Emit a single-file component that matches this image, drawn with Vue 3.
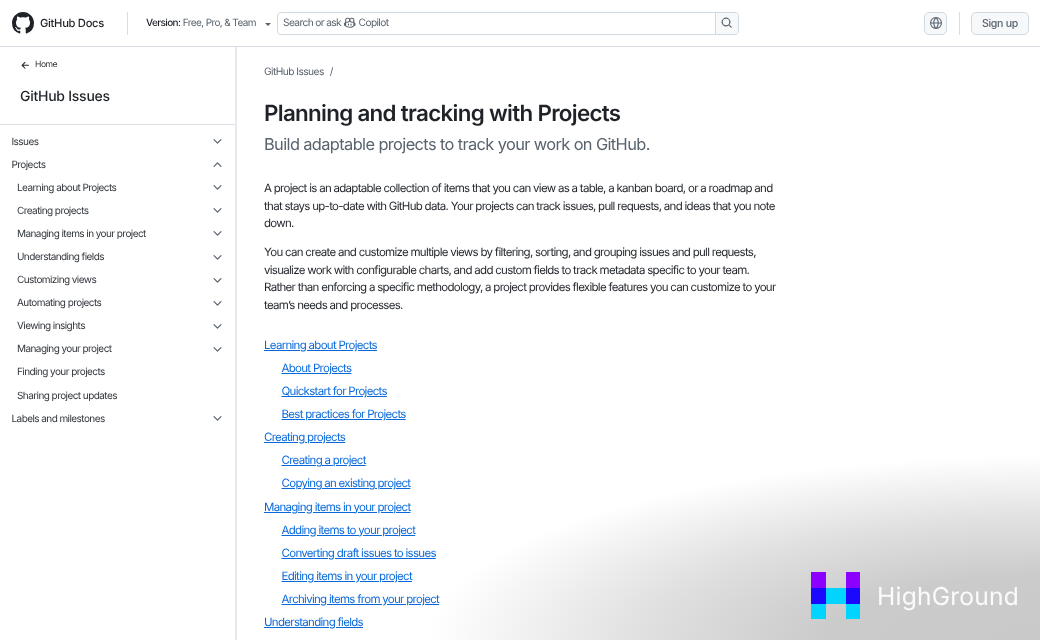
<template>
  <div class="page">
    <header class="topbar">
      <a class="brand">
        <svg class="mark" viewBox="0 0 16 16"><path d="M8 0c4.42 0 8 3.58 8 8a8.013 8.013 0 0 1-5.45 7.59c-.4.08-.55-.17-.55-.38 0-.27.01-1.13.01-2.2 0-.75-.25-1.23-.54-1.48 1.78-.2 3.65-.88 3.65-3.95 0-.88-.31-1.59-.82-2.15.08-.2.36-1.02-.08-2.12 0 0-.67-.22-2.2.82-.64-.18-1.32-.27-2-.27-.68 0-1.36.09-2 .27-1.53-1.03-2.2-.82-2.2-.82-.44 1.1-.16 1.92-.08 2.12-.51.56-.82 1.28-.82 2.15 0 3.06 1.86 3.75 3.64 3.95-.23.2-.44.55-.51 1.07-.46.21-1.61.55-2.33-.66-.15-.24-.6-.83-1.23-.82-.67.01-.27.38.01.53.34.19.73.9.82 1.13.16.45.68 1.31 2.69.94 0 .67.01 1.3.01 1.49 0 .21-.15.45-.55.38A7.995 7.995 0 0 1 0 8c0-4.42 3.58-8 8-8Z" /></svg>
        <span>GitHub Docs</span>
      </a>
      <span class="vline"></span>
      <div class="version">
        <span><b>Version:</b> Free, Pro, &amp; Team</span>
        <i class="caret"></i>
      </div>
      <div class="search">
        <div class="search-input">
          <span>Search or ask</span>
          <svg class="copilot" viewBox="0 0 16 16"><path d="M7.998 15.035c-4.562 0-7.873-2.914-7.998-3.749V9.338c.085-.628.677-1.686 1.588-2.065.013-.07.024-.143.036-.218.029-.183.06-.384.126-.612-.201-.508-.254-1.084-.254-1.656 0-.87.128-1.769.693-2.484.579-.733 1.494-1.124 2.724-1.261 1.206-.134 2.262.034 2.944.765.05.053.096.108.139.165.044-.057.094-.112.143-.165.682-.731 1.738-.899 2.944-.765 1.23.137 2.145.528 2.724 1.261.566.715.693 1.614.693 2.484 0 .572-.053 1.148-.254 1.656.066.228.098.429.126.612.012.076.024.148.037.218.924.385 1.522 1.471 1.591 2.095v1.872c0 .766-3.351 3.795-8.002 3.795Zm0-1.485c2.28 0 4.584-1.11 5.002-1.433V7.862l-.023-.116c-.49.21-1.075.291-1.727.291-1.146 0-2.059-.327-2.71-.991A3.222 3.222 0 0 1 8 6.303a3.24 3.24 0 0 1-.544.743c-.65.664-1.563.991-2.71.991-.652 0-1.236-.081-1.727-.291l-.023.116v4.255c.419.323 2.722 1.433 5.002 1.433ZM6.762 2.83c-.193-.206-.637-.413-1.682-.297-1.019.113-1.479.404-1.713.7-.247.312-.369.789-.369 1.554 0 .793.129 1.171.308 1.371.162.181.519.379 1.442.379.853 0 1.339-.235 1.638-.54.315-.322.527-.827.617-1.553.117-.935-.037-1.395-.241-1.614Zm4.155-.297c-1.044-.116-1.488.091-1.681.297-.204.219-.359.679-.242 1.614.091.726.303 1.231.618 1.553.299.305.784.54 1.638.54.922 0 1.28-.198 1.442-.379.179-.2.308-.578.308-1.371 0-.765-.123-1.242-.37-1.554-.233-.296-.693-.587-1.713-.7Z" /><path d="M6.25 9.037a.75.75 0 0 1 .75.75v1.501a.75.75 0 0 1-1.5 0V9.787a.75.75 0 0 1 .75-.75Zm4.25.75v1.501a.75.75 0 0 1-1.5 0V9.787a.75.75 0 0 1 1.5 0Z" /></svg>
          <span>Copilot</span>
        </div>
        <button class="search-btn">
          <svg viewBox="0 0 16 16"><path d="M10.68 11.74a6 6 0 0 1-7.922-8.982 6 6 0 0 1 8.982 7.922l3.04 3.04a.749.749 0 0 1-.326 1.275.749.749 0 0 1-.734-.215ZM11.5 7a4.499 4.499 0 1 0-8.997 0A4.499 4.499 0 0 0 11.5 7Z" /></svg>
        </button>
      </div>
      <div class="top-right">
        <button class="globe">
          <svg viewBox="0 0 16 16"><path d="M8 0a8 8 0 1 1 0 16A8 8 0 0 1 8 0ZM5.78 8.75a9.64 9.64 0 0 0 1.363 4.177c.255.426.542.832.857 1.215.245-.296.551-.705.857-1.215A9.64 9.64 0 0 0 10.22 8.75Zm4.44-1.5a9.64 9.64 0 0 0-1.363-4.177c-.307-.51-.612-.919-.857-1.215a9.927 9.927 0 0 0-.857 1.215A9.64 9.64 0 0 0 5.78 7.25Zm-5.944 1.5H1.543a6.507 6.507 0 0 0 4.666 5.5c-.123-.181-.24-.365-.352-.552-.715-1.192-1.437-2.874-1.581-4.948Zm-2.733-1.5h2.733c.144-2.074.866-3.756 1.58-4.948.12-.197.237-.381.353-.552a6.507 6.507 0 0 0-4.666 5.5Zm10.181 1.5c-.144 2.074-.866 3.756-1.58 4.948-.12.197-.237.381-.353.552a6.507 6.507 0 0 0 4.666-5.5Zm2.733-1.5a6.507 6.507 0 0 0-4.666-5.5c.123.181.24.365.353.552.714 1.192 1.436 2.874 1.58 4.948Z" /></svg>
        </button>
        <span class="vline"></span>
        <button class="signup">Sign up</button>
      </div>
    </header>

    <div class="body">
      <aside class="sidebar">
        <div class="side-head">
          <a class="home">
            <svg viewBox="0 0 16 16"><path d="M7.78 12.53a.75.75 0 0 1-1.06 0L2.47 8.28a.75.75 0 0 1 0-1.06l4.25-4.25a.751.751 0 0 1 1.042.018.751.751 0 0 1 .018 1.042L4.81 7h7.44a.75.75 0 0 1 0 1.5H4.81l2.97 2.97a.75.75 0 0 1 0 1.06Z" /></svg>
            Home
          </a>
          <div class="side-title">GitHub Issues</div>
        </div>
        <ul class="nav">
          <li v-for="item in navItems" :key="item.label" :class="{ sub: item.sub }">
            <span>{{ item.label }}</span>
            <svg v-if="item.chevron" :class="{ up: item.chevron === 'up' }" viewBox="0 0 16 16"><path d="M12.78 5.22a.749.749 0 0 1 0 1.06l-4.25 4.25a.749.749 0 0 1-1.06 0L3.22 6.28a.749.749 0 1 1 1.06-1.06L8 8.939l3.72-3.719a.749.749 0 0 1 1.06 0Z" /></svg>
          </li>
        </ul>
      </aside>

      <main class="content">
        <div class="crumbs"><span>GitHub Issues</span><span>/</span></div>
        <h1>Planning and tracking with Projects</h1>
        <p class="lead">Build adaptable projects to track your work on GitHub.</p>
        <p class="para">A project is an adaptable collection of items that you can view as a table, a kanban board, or a roadmap and that stays up-to-date with GitHub data. Your projects can track issues, pull requests, and ideas that you note down.</p>
        <p class="para">You can create and customize multiple views by filtering, sorting, and grouping issues and pull requests, visualize work with configurable charts, and add custom fields to track metadata specific to your team. Rather than enforcing a specific methodology, a project provides flexible features you can customize to your team’s needs and processes.</p>
        <ul class="links">
          <li v-for="link in links" :key="link.label" :class="{ indent: link.indent }"><a>{{ link.label }}</a></li>
        </ul>
      </main>
    </div>

    <div class="watermark">
      <div class="wm-logo">
        <i class="violet"></i><i></i><i class="violet"></i>
        <i class="blue"></i><i class="cyan"></i><i class="blue"></i>
        <i class="cyan"></i><i></i><i class="cyan"></i>
      </div>
      <span class="wm-text">HighGround</span>
    </div>
  </div>
</template>

<script setup>
const navItems = [
  { label: "Issues", chevron: "down" },
  { label: "Projects", chevron: "up" },
  { label: "Learning about Projects", chevron: "down", sub: true },
  { label: "Creating projects", chevron: "down", sub: true },
  { label: "Managing items in your project", chevron: "down", sub: true },
  { label: "Understanding fields", chevron: "down", sub: true },
  { label: "Customizing views", chevron: "down", sub: true },
  { label: "Automating projects", chevron: "down", sub: true },
  { label: "Viewing insights", chevron: "down", sub: true },
  { label: "Managing your project", chevron: "down", sub: true },
  { label: "Finding your projects", sub: true },
  { label: "Sharing project updates", sub: true },
  { label: "Labels and milestones", chevron: "down" },
];

const links = [
  { label: "Learning about Projects" },
  { label: "About Projects", indent: true },
  { label: "Quickstart for Projects", indent: true },
  { label: "Best practices for Projects", indent: true },
  { label: "Creating projects" },
  { label: "Creating a project", indent: true },
  { label: "Copying an existing project", indent: true },
  { label: "Managing items in your project" },
  { label: "Adding items to your project", indent: true },
  { label: "Converting draft issues to issues", indent: true },
  { label: "Editing items in your project", indent: true },
  { label: "Archiving items from your project", indent: true },
  { label: "Understanding fields" },
];
</script>

<style>
html,
body {
  margin: 0;
  overflow: hidden;
}
</style>

<style scoped>
.page {
  position: relative;
  height: 640px;
  overflow: hidden;
  background: #fff;
  color: #1f2328;
  font-family: Inter, "Liberation Sans", sans-serif;
  text-rendering: geometricPrecision;
}
.topbar {
  height: 47px;
  box-sizing: border-box;
  border-bottom: 1px solid #d8dee4;
  display: flex;
  align-items: center;
  padding: 0 11px 0 12px;
}
.brand {
  display: flex;
  align-items: center;
  gap: 6px;
  font-size: 11.2px;
  letter-spacing: -0.3px;
  font-weight: 500;
}
.mark {
  width: 22px;
  height: 22px;
  fill: #1f2328;
}
.vline {
  width: 1px;
  height: 23px;
  background: #d8dee4;
}
.brand + .vline {
  margin-left: 23px;
}
.version {
  margin-left: 18px;
  margin-top: -1px;
  width: 125px;
  flex: none;
  display: flex;
  align-items: center;
  justify-content: space-between;
  font-size: 10px;
  letter-spacing: -0.6px;
  color: #59636e;
  white-space: nowrap;
}
.version b {
  font-weight: 500;
  color: #1f2328;
}
.caret {
  border: 3px solid transparent;
  border-top-color: #59636e;
  border-bottom: 0;
  margin-top: 3px;
}
.search {
  margin-left: 6px;
  width: 462px;
  height: 23px;
  display: flex;
  box-sizing: border-box;
  border: 1px solid #d1d9e0;
  border-radius: 4px;
}
.search-input {
  flex: 1;
  display: flex;
  align-items: center;
  gap: 3px;
  padding-left: 5px;
  font-size: 10.2px;
  letter-spacing: -0.62px;
  color: #59636e;
}
.copilot {
  width: 11.5px;
  height: 11.5px;
  fill: #59636e;
}
.search-btn {
  width: 23px;
  padding: 0;
  border: 0;
  border-left: 1px solid #d1d9e0;
  background: #f6f8fa;
  border-radius: 0 3px 3px 0;
  display: flex;
  align-items: center;
  justify-content: center;
}
.search-btn svg {
  width: 11.5px;
  height: 11.5px;
  fill: #59636e;
}
.top-right {
  margin-left: auto;
  display: flex;
  align-items: center;
}
.globe {
  width: 23px;
  height: 23px;
  padding: 0;
  box-sizing: border-box;
  border: 1px solid #d1d9e0;
  border-radius: 5px;
  background: #f6f8fa;
  display: flex;
  align-items: center;
  justify-content: center;
}
.globe svg {
  width: 12px;
  height: 12px;
  fill: #59636e;
}
.top-right .vline {
  margin: 0 11px 0 12px;
}
.signup {
  width: 58px;
  height: 23px;
  padding: 0;
  box-sizing: border-box;
  border: 1px solid #d1d9e0;
  border-radius: 5px;
  background: #f6f8fa;
  color: #59636e;
  font: 500 10.6px Inter, "Liberation Sans", sans-serif;
  letter-spacing: -0.3px;
}
.body {
  display: flex;
}
.sidebar {
  width: 237px;
  box-sizing: border-box;
  flex: none;
  height: 593px;
  border-right: 2px solid #e6eaef;
}
.side-head {
  height: 78px;
  box-sizing: border-box;
  border-bottom: 1px solid #d8dee4;
  padding: 11px 0 0 20px;
}
.home {
  display: flex;
  align-items: center;
  gap: 4px;
  height: 14px;
  font-size: 8.6px;
  letter-spacing: -0.5px;
  color: #31363c;
}
.home svg {
  width: 11px;
  height: 11px;
  fill: #1f2328;
}
.side-title {
  margin-top: 16px;
  font-size: 14px;
  font-weight: 500;
  letter-spacing: -0.25px;
  line-height: 18px;
}
.nav {
  list-style: none;
  margin: 0;
  padding: 5px 0 0;
}
.nav li {
  height: 23.1px;
  display: flex;
  align-items: center;
  justify-content: space-between;
  padding: 0 11.5px 0 11.5px;
  font-size: 10px;
  letter-spacing: -0.57px;
  color: #31363c;
}
.nav li.sub {
  padding-left: 17px;
}
.nav svg {
  width: 13px;
  height: 13px;
  fill: #59636e;
}
.nav svg.up {
  transform: rotate(180deg);
}
.content {
  padding: 18px 0 0 27px;
  width: 517px;
}
.crumbs {
  display: flex;
  gap: 6px;
  font-size: 10.2px;
  letter-spacing: -0.55px;
  line-height: 14px;
  color: #59636e;
}
h1 {
  margin: 20px 0 0;
  font-size: 22.4px;
  font-weight: 600;
  line-height: 30px;
  letter-spacing: -0.7px;
}
.lead {
  margin: 3px 0 0;
  font-size: 16.4px;
  letter-spacing: -0.62px;
  line-height: 24px;
  color: #59636e;
}
.para {
  margin: 0 0 11.5px;
  font-size: 11.5px;
  letter-spacing: -0.71px;
  line-height: 17.5px;
}
.lead + .para {
  margin-top: 24px;
}
.links {
  list-style: none;
  margin: 20px 0 0;
  padding: 0;
  font-size: 11.5px;
  letter-spacing: -0.71px;
}
.links li {
  height: 23.08px;
  line-height: 23.08px;
}
.links li.indent {
  padding-left: 17.5px;
}
.links a {
  color: #0969da;
  text-decoration: underline;
}
.watermark {
  position: absolute;
  inset: 0;
  pointer-events: none;
  background: radial-gradient(ellipse 612px 184px at 100% 100%, #c9c9c9 0%, #cbcbcb 35%, #e0e0e0 65%, #f6f6f6 90%, #ffffff 100%);
  mix-blend-mode: multiply;
}
.wm-logo {
  position: absolute;
  left: 811px;
  top: 572px;
  display: grid;
  grid-template-columns: 14.5px 20px 14.5px;
  grid-template-rows: 16px 15.5px 15.5px;
}
.violet {
  background: #8c00ff;
}
.blue {
  background: #1a08ff;
}
.cyan {
  background: #00d4ff;
}
.wm-text {
  position: absolute;
  left: 877px;
  top: 579px;
  font-family: Inter, sans-serif;
  font-size: 24.6px;
  letter-spacing: 0.2px;
  line-height: 34px;
  color: #fbfbfb;
}
</style>
